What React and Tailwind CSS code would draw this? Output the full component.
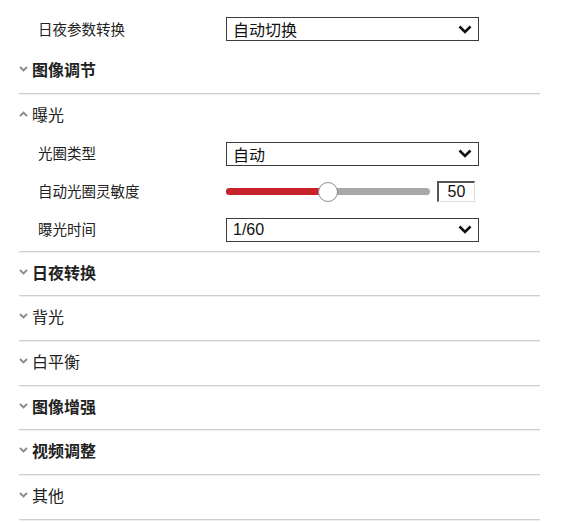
import React from 'react';

const cjk = { fontFamily: '"Microsoft YaHei", "Noto Sans CJK SC", "Liberation Sans", sans-serif' };

const Chevron = ({ up }) => (
  <svg width="9" height="6" viewBox="0 0 9 6" className="mr-[4px] shrink-0">
    {up ? (
      <polyline points="1,5 4.5,1.5 8,5" fill="none" stroke="#8a8a8a" strokeWidth="1.8" />
    ) : (
      <polyline points="1,1 4.5,4.5 8,1" fill="none" stroke="#8a8a8a" strokeWidth="1.8" />
    )}
  </svg>
);

const Select = ({ value, latin }) => (
  <div className="w-[253px] h-[24px] border border-[#3c3c3c] bg-white flex items-center justify-between pl-[6px] pr-[6px]">
    <span
      className="text-[16px] leading-none text-[#111]"
      style={latin ? { fontFamily: '"Liberation Sans", Arial, sans-serif' } : cjk}
    >
      {value}
    </span>
    <svg width="14" height="9" viewBox="0 0 14 9">
      <polyline points="1.5,1.5 7,7 12.5,1.5" fill="none" stroke="#111" strokeWidth="2.6" />
    </svg>
  </div>
);

const Row = ({ label, children }) => (
  <div className="h-[38px] flex items-center">
    <div className="w-[226px] shrink-0 pl-[38px] text-[14.5px] text-[#222] leading-none" style={cjk}>{label}</div>
    {children}
  </div>
);

const Section = ({ title, open, strong, children }) => (
  <div className="border-b border-[#cfcfcf] shadow-[0_1px_0_#efefef]">
    <div className={`flex items-center ${open ? 'h-[41px]' : 'h-[43.7px] pb-[4px]'}`}>
      <Chevron up={open} />
      <span
        className={`text-[16px] text-[#222] leading-none ${strong ? 'font-bold' : 'font-normal'}`}
        style={cjk}
      >
        {title}
      </span>
    </div>
    {children}
  </div>
);

const Slider = () => (
  <div className="flex items-center">
    <div className="relative w-[204px] h-[20px] flex items-center">
      <div className="w-full h-[7px] rounded-full bg-[#a8a8a8] flex">
        <div className="w-[100px] h-full rounded-l-full bg-[#c8222b]" />
      </div>
      <div className="absolute left-[92px] top-0 w-[20px] h-[20px] rounded-full bg-white border border-[#8c8c8c]" />
    </div>
    <div
      className="ml-[7px] w-[38px] h-[21px] border-t-2 border-l-2 border-b border-r border-t-[#555] border-l-[#555] border-b-[#ddd] border-r-[#ddd] bg-white flex items-center justify-center text-[16px] text-[#111]"
      style={{ fontFamily: '"Liberation Sans", Arial, sans-serif' }}
    >
      50
    </div>
  </div>
);

export default function App() {
  return (
    <div className="w-[561px] h-[523px] bg-white overflow-hidden">
      <div className="pl-[19px] w-[540px]">
        <div className="pt-[17px] pb-[8px] flex items-center">
          <div className="w-[207px] shrink-0 pl-[19px] text-[14.5px] text-[#222] leading-none" style={cjk}>日夜参数转换</div>
          <Select value="自动切换" />
        </div>
        <Section title="图像调节" strong />
        <Section title="曝光" open>
          <div className="-ml-[19px] pb-[2px]">
            <Row label="光圈类型"><Select value="自动" /></Row>
            <Row label="自动光圈灵敏度"><Slider /></Row>
            <Row label="曝光时间"><Select value="1/60" latin /></Row>
          </div>
        </Section>
        <Section title="日夜转换" strong />
        <Section title="背光" />
        <Section title="白平衡" />
        <Section title="图像增强" strong />
        <Section title="视频调整" strong />
        <Section title="其他" />
      </div>
    </div>
  );
}
